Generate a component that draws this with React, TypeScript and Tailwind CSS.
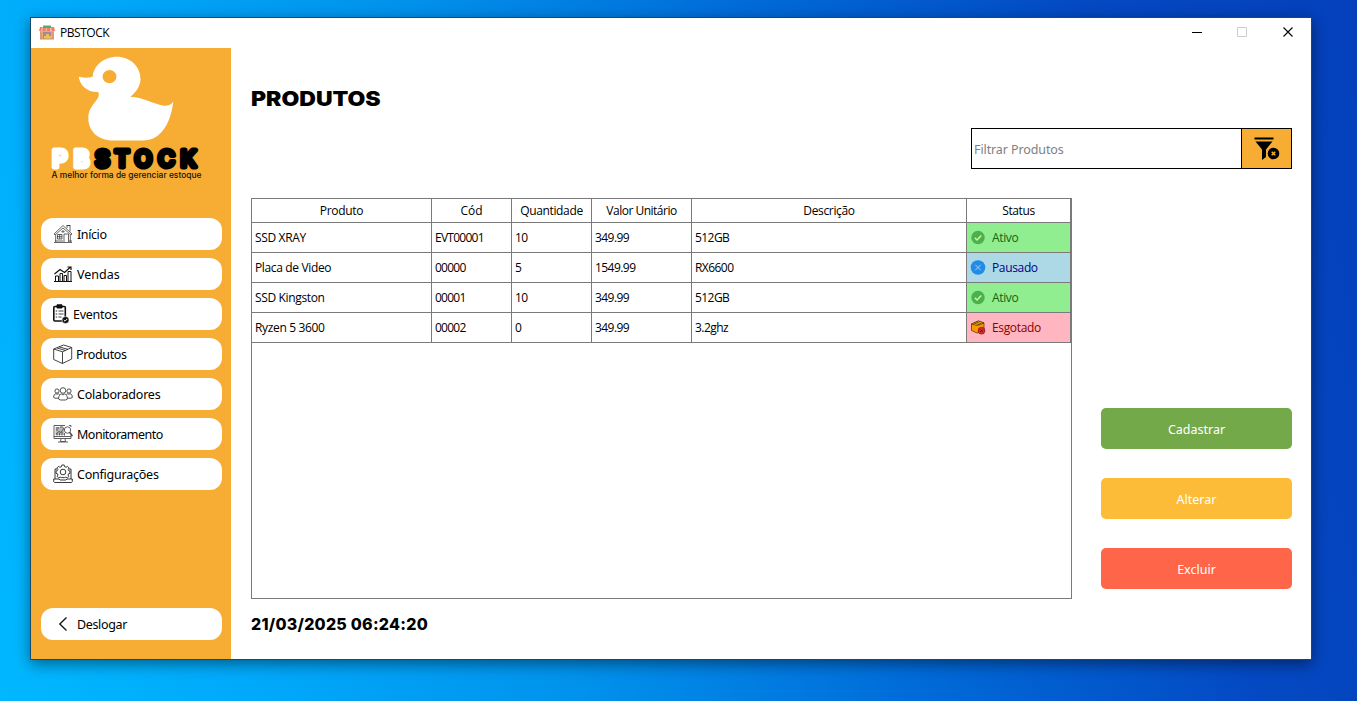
import React from "react";

type IconProps = { className?: string };

const ShopIcon = () => (
  <svg className="h-4 w-4" viewBox="0 0 16 16">
    <rect x="1" y="6" width="14" height="8" fill="#e8ac73" />
    <path d="M1 2H15L16 6H0Z" fill="#ef7d68" />
    <path d="M3 2H4L3.5 6H2ZM7 2H8V6H6.500ZM11 2H12L13 6H11Z" fill="#f9b9a5" />
    <rect x="4" y="0.500" width="8" height="2.500" rx="0.500" fill="#54ae66" />
    <rect x="4" y="7" width="8" height="7" fill="#a18a9d" />
    <path d="M5 14V11H7V9H10V11H12V14Z" fill="#f4bd58" />
    <path d="M1 14H15M2 7V14M14 7V14" stroke="#c98d82" />
  </svg>
);

const HomeIcon = ({ className }: IconProps) => (
  <svg className={className} viewBox="0 0 20 20" fill="none" stroke="#333" strokeWidth="0.75">
    <path d="M1 10L10 1.500L19 10L18 11L10 4L2 11ZM2.700 11V18M17.300 11V18M14 4V1.500H17V7.500M13.500 1.500H17.500" />
    <path d="M1 18.500H19M4.500 10.500H9V15H4.500ZM6.700 10.500V15M4.500 12.700H9M11 18V10H15.500V18M8.800 8A1.200 1.200 0 0 1 11.200 8Z" />
    <path d="M2 17H10M16 17H19" />
  </svg>
);

const SalesIcon = ({ className }: IconProps) => (
  <svg className={className} viewBox="0 0 20 20" fill="none" stroke="#111" strokeWidth="1">
    <path d="M1 17.500H19M2.500 17V12H5.500V17M7 17V9.500H9.500V17M11 17V11.500H13.500V17M15 17V7.500H18V17" />
    <path d="M1.500 10L7 5.500L11.500 8.500L17.500 3M14.500 3H18V6" strokeWidth="1.200" />
  </svg>
);

const EventsIcon = ({ className }: IconProps) => (
  <svg className={className} viewBox="0 0 18 20" fill="none" stroke="#111">
    <rect x="1.800" y="2.500" width="11.500" height="14.500" rx="1" strokeWidth="1.600" />
    <path d="M5 0.800H10V4H5Z" fill="#111" />
    <path d="M6.500 7H11.500M6.500 10H11.500M6.500 13H9.500" strokeWidth="0.800" />
    <path d="M3.700 7H5.200M3.700 10H5.200M3.700 13H5.200" strokeWidth="0.900" />
    <circle cx="13.500" cy="16" r="3.600" fill="#111" stroke="#fff" strokeWidth="0.600" />
    <path d="M11.800 16L13 17.200L15.300 14.900" stroke="#fff" />
  </svg>
);

const BoxIcon = ({ className }: IconProps) => (
  <svg className={className} viewBox="0 0 20 20" fill="none" stroke="#222" strokeWidth="0.850" strokeLinejoin="round">
    <path d="M0.700 5L10.500 1L18.700 3.500L9.500 7.800ZM0.700 5V15.500L9.500 19.500L18.700 15V3.500M9.500 7.800V19.500" />
    <path d="M4 4L12.500 6.500M6.300 3L15 5.300" />
  </svg>
);

const PeopleIcon = ({ className }: IconProps) => (
  <svg className={className} viewBox="0 0 20 20" fill="none" stroke="#333" strokeWidth="0.850">
    <circle cx="10" cy="6.500" r="2.800" />
    <circle cx="4" cy="7" r="2.100" />
    <circle cx="16" cy="7" r="2.100" />
    <path d="M5.500 15C5.500 11.500 7 10.300 8.500 10L10 11L11.500 10C13 10.300 14.500 11.500 14.500 15L12.500 16H7.500Z" />
    <path d="M0.700 13.500C0.700 11 1.500 10 3 9.700L4 10.300L5.500 9.700L6.700 10.500M0.700 13.500L2 14.200H5M19.300 13.500C19.300 11 18.500 10 17 9.700L16 10.300L14.500 9.700L13.300 10.500M19.300 13.500L18 14.200H15" />
  </svg>
);

const MonitorIcon = ({ className }: IconProps) => (
  <svg className={className} viewBox="0 0 20 20" fill="none" stroke="#444" strokeWidth="0.850">
    <path d="M12 1.500H1V14.500H18V11M1 12.500H18M8 14.500L7.500 17.500H12.500L12 14.500M5 18H15M16 1.500H18V3" />
    <path d="M2.500 3H11V11H2.500Z" fill="#bbb" stroke="none" />
    <circle cx="14.500" cy="6" r="3.200" fill="#fff" />
    <path d="M16.500 8.300L19.500 12" strokeWidth="1.500" />
    <path d="M3 4H6M3 6H5M3 10L6 7.500L8 8.500L11 4M4 11.500V9.500M6.500 11.500V9M9 11.500V8M11.500 11.500V9M7 3H10" />
  </svg>
);

const ConfigIcon = ({ className }: IconProps) => (
  <svg className={className} viewBox="0 0 20 20" fill="none" stroke="#222" strokeWidth="0.900">
    <path d="M4 5H2V15M16 5H18V15M0.700 15H6L7 16H13L14 15H19.300V17.500L18.500 18.500H1.500L0.700 17.500Z" />
    <path d="M8.800 1H11.200L11.600 2.700L13 3.300L14.500 2.400L16.100 4L15.200 5.500L15.700 6.700L17 7.100V9.300L15.600 9.700L15 11L15.900 12.400L14.200 14L12.800 13.100L11.600 13.600H8.400L7.200 13.100L5.800 14L4.100 12.400L5 11L4.400 9.700L3 9.300V7.100L4.300 6.700L4.800 5.500L3.900 4L5.500 2.400L7 3.300L8.400 2.700Z" />
    <circle cx="10" cy="8" r="2.800" />
  </svg>
);

const FilterIcon = () => (
  <svg className="h-[26px] w-[26px]" viewBox="0 0 26 26">
    <path d="M0.500 2.500H19.500" stroke="#000" strokeWidth="2" />
    <path d="M1.500 5.500H18.500L12 13.500V21L8 24V13.500Z" fill="#000" />
    <circle cx="19.500" cy="17.500" r="6.500" fill="#f7ad34" />
    <circle cx="19.500" cy="17.500" r="5.800" fill="#000" />
    <path d="M17.700 15.700L21.300 19.300M21.300 15.700L17.700 19.300" stroke="#f7ad34" strokeWidth="1.500" />
  </svg>
);

const ActiveIcon = () => (
  <svg className="h-4 w-4" viewBox="0 0 16 16" fill="none">
    <circle cx="8" cy="7.500" r="6.700" fill="#4caf50" />
    <path d="M4.800 7.800L7 10L11.300 5.500" stroke="#ccff90" strokeWidth="1.400" />
  </svg>
);

const PausedIcon = () => (
  <svg className="h-4 w-4" viewBox="0 0 16 16" fill="none">
    <circle cx="8" cy="7.500" r="7.300" fill="#228be6" />
    <path d="M5.300 4.800L10.700 10.200M10.700 4.800L5.300 10.200" stroke="#a5d3f7" strokeWidth="1" />
  </svg>
);

const SoldOutIcon = () => (
  <svg className="h-4 w-4" viewBox="0 0 16 16" strokeLinejoin="round" strokeWidth="0.700">
    <path d="M1.500 4L8.500 1L14 3V10.500L7 13L1.500 10.500Z" fill="#ff9800" stroke="#4e2a0a" />
    <path d="M1.500 4L8.500 1L14 3L7 5.500Z" fill="#ffc21c" stroke="#3d2a0a" />
    <path d="M4 3L9.500 4.700M6.300 2L11.500 3.900" stroke="#3d2a0a" />
    <circle cx="11.500" cy="10.700" r="3.400" fill="#d62f2f" stroke="#7d1818" />
    <path d="M10.400 9.600L12.600 11.800M12.600 9.600L10.400 11.800" stroke="#5f0b0b" strokeWidth="1" />
  </svg>
);

const Logo = () => (
  <svg className="h-[152px] w-[200px]" viewBox="0 0 200 152">
    <path
      fillRule="evenodd"
      d="M99.500 48.700C105.500 44 109.500 37.500 109.500 31C109.500 18 98.500 8.700 86 8.700C73 8.700 62.500 17.500 61.800 28.500C57 30.500 52.500 29.500 47.800 28.700C49 38 57 44.500 67 44C71.500 51 57.300 56 57.300 70C57.300 83 67 92.500 82 92.500H112C129 92.500 139.500 77 142.300 53.500C140 57.500 135.500 58.500 131.500 57.500C121 55 112 49.500 99.500 48.700ZM78.500 22A7 6.600 0 1 0 78.500 35.200A7 6.600 0 1 0 78.500 22Z"
      fill="#fff"
    />
    <g
      fontFamily="Inter, 'Liberation Sans', sans-serif"
      fontWeight="500"
      fontSize="23"
      strokeWidth="5"
      strokeLinejoin="round"
      strokeLinecap="round"
    >
      <text x="21.500 43" y="119.300" fill="#fff" stroke="#fff">PB</text>
      <text x="64 83.500 103.500 127 149.500" y="119.300" fill="#000" stroke="#000">STOCK</text>
    </g>
    <text
      x="20.500"
      y="129.500"
      textLength="150"
      lengthAdjust="spacingAndGlyphs"
      fontFamily="Inter, 'Liberation Sans', sans-serif"
      fontSize="8.600"
      fontWeight="500"
      fill="#111"
    >
      A melhor forma de gerenciar estoque
    </text>
  </svg>
);

const navItems = [
  { label: "Início", Icon: HomeIcon, icon: "ml-3 h-5 w-5", text: "ml-1 tracking-[-0.4px]" },
  { label: "Vendas", Icon: SalesIcon, icon: "ml-3 h-5 w-5", text: "ml-1" },
  { label: "Eventos", Icon: EventsIcon, icon: "ml-[11px] h-5 w-[18px]", text: "ml-[3px] tracking-[-0.25px]" },
  { label: "Produtos", Icon: BoxIcon, icon: "ml-3 h-5 w-5", text: "ml-[3px] tracking-[-0.35px]" },
  { label: "Colaboradores", Icon: PeopleIcon, icon: "ml-3 h-5 w-5", text: "ml-1 tracking-[-0.2px]" },
  { label: "Monitoramento", Icon: MonitorIcon, icon: "ml-3 h-5 w-5", text: "ml-1 tracking-[-0.5px]" },
  { label: "Configurações", Icon: ConfigIcon, icon: "ml-3 h-5 w-5", text: "ml-1 tracking-[-0.23px]" },
];

const columns = [
  { name: "Produto", tracking: "tracking-[-0.3px]" },
  { name: "Cód", tracking: "tracking-[0px]" },
  { name: "Quantidade", tracking: "tracking-[-0.35px]" },
  { name: "Valor Unitário", tracking: "tracking-[-0.5px]" },
  { name: "Descrição", tracking: "tracking-[-0.35px]" },
  { name: "Status", tracking: "tracking-[-0.4px]" },
];

const statuses = {
  Ativo: { Icon: ActiveIcon, cell: "bg-[#90ee90] text-[#116411]" },
  Pausado: { Icon: PausedIcon, cell: "bg-[#add8e6] text-[#00008b]" },
  Esgotado: { Icon: SoldOutIcon, cell: "bg-[#ffb6c1] text-[#8b0000]" },
};

const rows: { cells: string[]; status: keyof typeof statuses }[] = [
  { cells: ["SSD XRAY", "EVT00001", "10", "349.99", "512GB"], status: "Ativo" },
  { cells: ["Placa de Video", "00000", "5", "1549.99", "RX6600"], status: "Pausado" },
  { cells: ["SSD Kingston", "00001", "10", "349.99", "512GB"], status: "Ativo" },
  { cells: ["Ryzen 5 3600", "00002", "0", "349.99", "3.2ghz"], status: "Esgotado" },
];

const cellTracking = [
  "tracking-[-0.35px]",
  "tracking-[-0.75px]",
  "tracking-[-0.5px]",
  "tracking-[-0.55px]",
  "tracking-[-0.55px]",
];

const grid = "grid grid-cols-[180px_80px_80px_100px_275px_104px]";
const navButton = "flex h-8 w-[181px] items-center rounded-[12px] bg-white text-left";
const action = "h-[41px] w-[191px] rounded-[5px] pt-[3px] text-white";

export default function App() {
  return (
    <div className="h-[701px] w-[1357px] overflow-hidden bg-[linear-gradient(76deg,#00b8ff_0%,#00a8fa_18%,#0092ec_38%,#006bd9_60%,#0449c3_82%,#0440bb_100%)] pt-[17px] pl-[30px]">
      <div className="flex h-[643px] w-[1282px] flex-col border border-[#17486e] bg-white font-['Noto_Sans',sans-serif] text-[12.5px] text-black shadow-[0_4px_14px_rgba(0,0,0,0.45)]">
        <header className="flex h-[30px] shrink-0 items-center pl-2">
          <ShopIcon />
          <span className="ml-[5px] font-['Open_Sans',sans-serif] text-[12px] tracking-[-0.45px]">PBSTOCK</span>
          <div className="ml-auto flex items-center pr-[17px] pb-px">
            <svg className="h-[11px] w-[11px]" viewBox="0 0 11 11"><path d="M0 5.500H10" stroke="#000" /></svg>
            <svg className="ml-[34px] h-[11px] w-[11px]" viewBox="0 0 11 11" fill="none"><path d="M0.500 0.500H9.500V9.500H0.500Z" stroke="#ccc" /></svg>
            <svg className="ml-[35px] h-[11px] w-[11px]" viewBox="0 0 11 11"><path d="M0.500 0.500L9.500 9.500M9.500 0.500L0.500 9.500" stroke="#000" strokeWidth="1.100" /></svg>
          </div>
        </header>
        <div className="flex min-h-0 flex-1">
          <aside className="flex w-[200px] shrink-0 flex-col bg-[#f7ad34] pb-[19px]">
            <Logo />
            <nav className="mt-[18px] flex flex-col gap-2 pl-[10px]">
              {navItems.map(({ label, Icon, icon, text }) => (
                <button key={label} className={navButton}>
                  <Icon className={`shrink-0 ${icon}`} />
                  <span className={`pt-0.5 ${text}`}>{label}</span>
                </button>
              ))}
            </nav>
            <button className={`mt-auto ml-[10px] ${navButton}`}>
              <svg className="ml-[17px] h-4 w-[11px]" viewBox="0 0 11 16" fill="none"><path d="M8.500 1.500L1.800 8L8.500 14.500" stroke="#111" strokeWidth="1.300" /></svg>
              <span className="ml-2 pt-0.5 tracking-[-0.35px]">Deslogar</span>
            </button>
          </aside>
          <main className="flex w-[1080px] flex-col pr-[19px] pl-5">
            <h1 className="mt-9 h-[30px] origin-left scale-x-[1.15] font-['Inter',sans-serif] text-[20px] leading-[30px] font-black">PRODUTOS</h1>
            <div className="mt-[14px] flex h-[41px] w-[321px] self-end border border-black">
              <input
                className="w-[269px] pt-[3px] pl-0.5 outline-none placeholder:text-[#808080] tracking-[-0.1px]"
                placeholder="Filtrar Produtos"
              />
              <button className="flex flex-1 items-center justify-center border-l border-black bg-[#f7ad34]">
                <FilterIcon />
              </button>
            </div>
            <div className="mt-[29px] flex justify-between">
              <section className="h-[401px] w-[821px] border border-[#7a7a7a] font-['Open_Sans',sans-serif] text-[12px]">
                <div className={`${grid} h-6`}>
                  {columns.map(({ name, tracking }) => (
                    <div key={name} className={`flex items-center justify-center border-r border-b border-[#7a7a7a] pt-px ${tracking}`}>{name}</div>
                  ))}
                </div>
                {rows.map(({ cells, status }) => {
                  const { Icon, cell } = statuses[status];
                  return (
                    <div key={cells[1]} className={`${grid} h-[30px]`}>
                      {cells.map((value, i) => (
                        <div key={i} className={`flex items-center border-r border-b border-[#7a7a7a] pt-px pl-[3px] ${cellTracking[i]}`}>{value}</div>
                      ))}
                      <div className={`flex items-center gap-[6px] border-r border-b border-[#7a7a7a] pl-[3px] tracking-[-0.35px] ${cell}`}>
                        <Icon />
                        <span className="pt-px">{status}</span>
                      </div>
                    </div>
                  );
                })}
              </section>
              <div className="mt-[210px] flex flex-col gap-[29px]">
                <button className={`${action} bg-[#74a949]`}>Cadastrar</button>
                <button className={`${action} bg-[#fdbc38]`}>Alterar</button>
                <button className={`${action} bg-[#ff6548]`}>Excluir</button>
              </div>
            </div>
            <time className="mt-[13px] font-['Inter',sans-serif] text-[16px] leading-6 font-extrabold tracking-[0.25px]">21/03/2025 06:24:20</time>
          </main>
        </div>
      </div>
    </div>
  );
}
